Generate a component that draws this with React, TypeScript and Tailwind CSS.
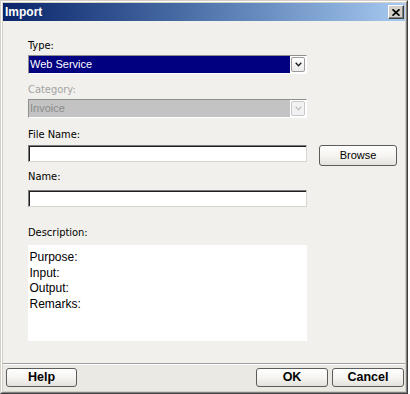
import React from "react";

const labelCls =
  "block h-[13px] text-[11px] leading-[13px] text-black font-['DejaVu_Sans_Condensed','DejaVu_Sans',sans-serif] whitespace-nowrap";
const labelDisabledCls =
  "block h-[13px] text-[11px] leading-[13px] text-[#a3a3a3] font-['DejaVu_Sans_Condensed','DejaVu_Sans',sans-serif] whitespace-nowrap";
const inputCls =
  "w-[279px] h-[17px] bg-white border border-t-[#7a7a7a] border-l-[#7a7a7a] border-r-[#d8d6d0] border-b-[#d8d6d0] shadow-[inset_1px_1px_0_#1e1e1e]";
const xpBtn =
  "flex items-center justify-center rounded-[3px] border border-[#5c5c5c] bg-linear-to-b from-[#ffffff] via-[#f6f5f2] to-[#e4e2dc] text-black";

function Chevron({ color }: { color: string }) {
  return (
    <svg width="7" height="5" viewBox="0 0 7 5">
      <path d="M0.7 0.8 L3.5 3.8 L6.3 0.8" stroke={color} strokeWidth="1.3" fill="none" />
    </svg>
  );
}

function Select({
  text,
  disabled,
}: {
  text: string;
  disabled?: boolean;
}) {
  return (
    <div
      className={
        "w-[279px] h-[19px] flex border border-t-[#8e8e8e] border-l-[#8e8e8e] border-r-white border-b-white " +
        (disabled ? "bg-[#c3c3c3]" : "bg-white")
      }
    >
      <div
        className={
          disabled
            ? "flex-1 flex items-center pl-px bg-[#c3c3c3] text-[#8c8c8c] text-[11px] leading-[17px] font-['Liberation_Sans',Arial,sans-serif]"
            : "flex-1 flex items-center pl-px bg-[#000080] text-white text-[11px] leading-[17px] font-['Liberation_Sans',Arial,sans-serif]"
        }
      >
        {text}
      </div>
      <div className={disabled ? "w-[16px] h-full bg-white p-px" : "w-[16px] h-full bg-white p-px"}>
        <div
          className={
            disabled
              ? "w-full h-full flex items-center justify-center rounded-[2px] border border-[#c8c8c8] bg-[#f2f2f2]"
              : "w-full h-full flex items-center justify-center rounded-[2px] border border-[#9c9c9c] bg-linear-to-b from-white to-[#ebebeb]"
          }
        >
          <Chevron color={disabled ? "#c0c0c0" : "#1a1a1a"} />
        </div>
      </div>
    </div>
  );
}

export default function App() {
  return (
    <div className="w-[410px] h-[394px] bg-white">
      <div className="w-[408px] h-[394px] border border-t-[#d4d0c8] border-l-[#d4d0c8] border-r-[#404040] border-b-[#404040] bg-[#d4d0c8]">
        <div className="h-full border border-t-white border-l-white border-r-[#808080] border-b-[#808080] p-px bg-[#d4d0c8] flex flex-col">
          {/* Title bar */}
          <div className="h-[18px] flex items-center justify-between bg-linear-to-r from-[#0a246a] to-[#a6caf0] pl-[2px] pr-px">
            <span className="text-white font-bold text-[12px] leading-[18px] font-['Liberation_Sans',Arial,sans-serif]">
              Import
            </span>
            <div className="w-[16px] h-[14px] flex items-center justify-center bg-[#d4d0c8] border border-t-white border-l-white border-r-[#404040] border-b-[#404040] shadow-[inset_-1px_-1px_0_#808080]">
              <svg width="8" height="7" viewBox="0 0 8 7">
                <path d="M0.5 0.3 L7.5 6.7 M7.5 0.3 L0.5 6.7" stroke="#000" strokeWidth="1.7" fill="none" />
              </svg>
            </div>
          </div>

          {/* Body */}
          <div className="h-[342px] bg-[#f1f0ec] pl-[25px] flex flex-col">
            <span className={labelCls + " mt-[18px]"}>Type:</span>
            <div className="mt-[3px]">
              <Select text="Web Service" />
            </div>

            <span className={labelDisabledCls + " mt-[9px]"}>Category:</span>
            <div className="mt-[3px]">
              <Select text="Invoice" disabled />
            </div>

            <span className={labelCls + " mt-[10px]"}>File Name:</span>
            <div className="mt-[4px] flex items-start gap-[12px]">
              <div className={inputCls} />
              <button
                className={
                  xpBtn +
                  " w-[78px] h-[21px] text-[11px] font-['Liberation_Sans',Arial,sans-serif]"
                }
              >
                Browse
              </button>
            </div>

            <span className={labelCls + " mt-[4px]"}>Name:</span>
            <div className="mt-[7px]">
              <div className={inputCls} />
            </div>

            <span className={labelCls + " mt-[19px]"}>Description:</span>
            <div className="mt-[6px] w-[279px] h-[96px] bg-white pt-[5px] pl-[1.5px] text-[12px] leading-[15.5px] text-black font-['Liberation_Sans',Arial,sans-serif]">
              <div>Purpose:</div>
              <div>Input:</div>
              <div>Output:</div>
              <div>Remarks:</div>
            </div>
          </div>

          {/* Separator */}
          <div className="h-px bg-[#a0a0a0]" />
          <div className="h-px bg-white" />

          {/* Footer */}
          <div className="flex-1 bg-[#ebe9e4] pt-[3px] pl-[3px] pr-px flex items-start justify-between">
            <button
              className={
                xpBtn +
                " w-[71px] h-[19px] font-bold text-[12.5px] font-['Liberation_Sans',Arial,sans-serif]"
              }
            >
              Help
            </button>
            <div className="flex gap-[4px]">
              <button
                className={
                  xpBtn +
                  " w-[72px] h-[19px] font-bold text-[12.5px] font-['Liberation_Sans',Arial,sans-serif]"
                }
              >
                OK
              </button>
              <button
                className={
                  xpBtn +
                  " w-[72px] h-[19px] font-bold text-[12.5px] font-['Liberation_Sans',Arial,sans-serif]"
                }
              >
                Cancel
              </button>
            </div>
          </div>
        </div>
      </div>
    </div>
  );
}
